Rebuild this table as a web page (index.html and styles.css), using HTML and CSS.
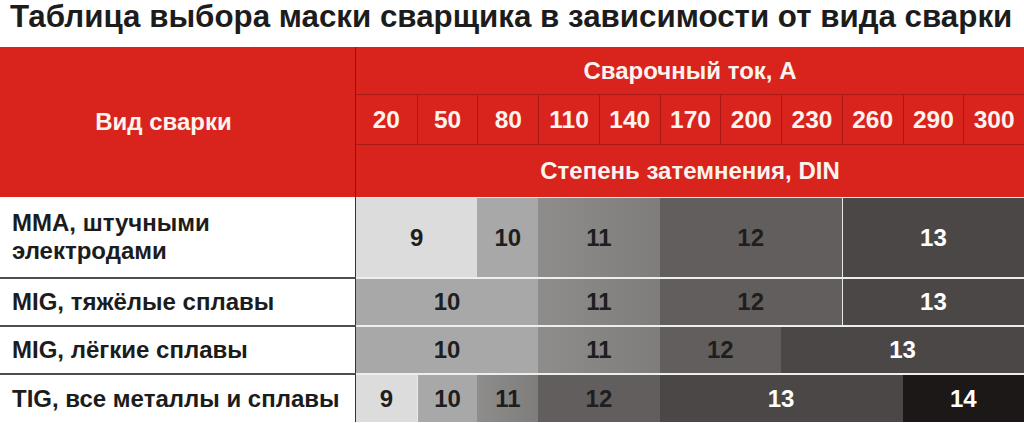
FILE: index.html
```html
<!DOCTYPE html>
<html lang="ru">
<head>
<meta charset="utf-8">
<title>Таблица выбора маски сварщика</title>
<link rel="stylesheet" href="styles.css">
</head>
<body>
<h1 class="title">Таблица выбора маски сварщика в зависимости от вида сварки</h1>
<div class="table">
  <div class="head head-kind">Вид сварки</div>
  <div class="head head-wide">Сварочный ток, А</div>
  <div class="head amp first">20</div>
  <div class="head amp">50</div>
  <div class="head amp">80</div>
  <div class="head amp">110</div>
  <div class="head amp">140</div>
  <div class="head amp">170</div>
  <div class="head amp">200</div>
  <div class="head amp">230</div>
  <div class="head amp">260</div>
  <div class="head amp">290</div>
  <div class="head amp">300</div>
  <div class="head head-wide head-din">Степень затемнения, DIN</div>

  <div class="kind r1">MMA, штучными<br>электродами</div>
  <div class="cell d9 r1 c1-2">9</div>
  <div class="cell d10 r1 c3">10</div>
  <div class="cell d11 r1 c4-5">11</div>
  <div class="cell d12 r1 c6-8">12</div>
  <div class="cell d13 r1 c9-11 sep">13</div>

  <div class="kind r2">MIG, тяжёлые сплавы</div>
  <div class="cell d10 r2 c1-3">10</div>
  <div class="cell d11 r2 c4-5">11</div>
  <div class="cell d12 r2 c6-8">12</div>
  <div class="cell d13 r2 c9-11 sep">13</div>

  <div class="kind r3">MIG, лёгкие сплавы</div>
  <div class="cell d10 r3 c1-3">10</div>
  <div class="cell d11 r3 c4-5">11</div>
  <div class="cell d12 r3 c6-7">12</div>
  <div class="cell d13 r3 c8-11">13</div>

  <div class="kind r4">TIG, все металлы и сплавы</div>
  <div class="cell d9 r4 c1">9</div>
  <div class="cell d10 r4 c2 sep">10</div>
  <div class="cell d11 r4 c3">11</div>
  <div class="cell d12 r4 c4-5">12</div>
  <div class="cell d13 r4 c6-9">13</div>
  <div class="cell d14 r4 c10-11">14</div>
</div>
</body>
</html>
```
FILE: styles.css
```css
html, body {
  margin: 0;
  padding: 0;
  background: #ffffff;
}
body {
  width: 1024px;
  height: 423px;
  overflow: hidden;
  font-family: "Liberation Sans", Arial, sans-serif;
}
.title {
  margin: 0;
  height: 47px;
  padding-left: 10px;
  font-size: 31.3px;
  line-height: 34px;
  font-weight: bold;
  color: #1c1c1c;
  white-space: nowrap;
}
.table {
  display: grid;
  grid-template-columns: 356px repeat(11, 1fr);
  grid-template-rows: 48px 50px 52px 80px 48px 48px 49px;
}
.head {
  background: #d9231d;
  color: #fbf3ee;
  font-weight: bold;
  font-size: 24px;
  display: flex;
  align-items: center;
  justify-content: center;
}
.head-kind {
  grid-column: 1;
  grid-row: 1 / 4;
  padding-right: 28px;
  border-right: 1px solid #5a2a26;
}
.head-wide {
  grid-column: 2 / -1;
  border-bottom: 1px solid #a91a15;
}
.head-din {
  border-bottom: none;
}
.amp {
  font-size: 24.5px;
  border-bottom: 1px solid #a91a15;
  border-left: 1px solid #a91a15;
}
.amp.first {
  border-left: none;
}
.kind {
  grid-column: 1;
  background: #ffffff;
  color: #1c1c1c;
  font-weight: bold;
  font-size: 24px;
  line-height: 28px;
  padding-left: 12px;
  display: flex;
  align-items: center;
  border-right: 1px solid #333333;
  border-top: 2px solid #4d4d4d;
}
.kind.r1 { border-top: none; }
.cell {
  display: flex;
  align-items: center;
  justify-content: center;
  font-weight: bold;
  font-size: 24px;
  color: #1e1e1e;
  border-top: 2px solid #eeeeee;
}
.cell.sep { border-left: 1px solid #e8e8e8; }
.r1 { grid-row: 4; }
.r2 { grid-row: 5; }
.r3 { grid-row: 6; }
.r4 { grid-row: 7; }
.c1 { grid-column: 2 / 3; }
.c2 { grid-column: 3 / 4; }
.c3 { grid-column: 4 / 5; }
.c1-2 { grid-column: 2 / 4; }
.c1-3 { grid-column: 2 / 5; }
.c4-5 { grid-column: 5 / 7; }
.c6-7 { grid-column: 7 / 9; }
.c6-8 { grid-column: 7 / 10; }
.c6-9 { grid-column: 7 / 11; }
.c8-11 { grid-column: 9 / 13; }
.c9-11 { grid-column: 10 / 13; }
.c10-11 { grid-column: 11 / 13; }
.d9 { background: #dcdcdc; }
.d10 { background: #a8a8a8; }
.d11 { background: linear-gradient(90deg, #8e8d8c, #7f7d7c); }
.d12 { background: #625e5d; }
.d13 { background: #4b4746; color: #ffffff; }
.d14 { background: #1c1817; color: #ffffff; }
.r1.cell { border-top: 1px solid #f3e6e4; }
```
